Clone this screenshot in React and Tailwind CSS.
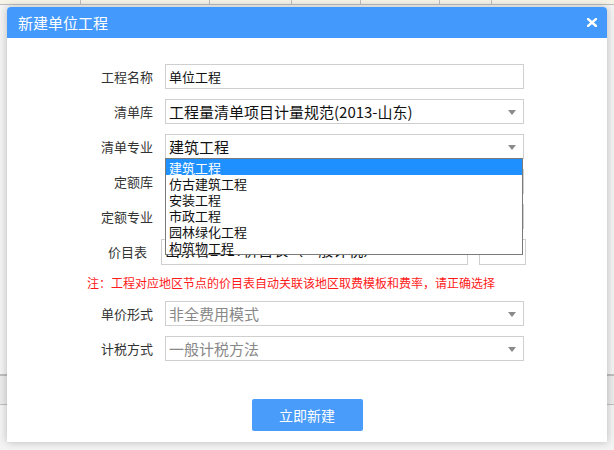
import React from "react";

const font = { fontFamily: '"Noto Sans CJK SC", "Microsoft YaHei", sans-serif' };

function Arrow() {
  return (
    <svg width="8" height="5" viewBox="0 0 8 5" className="absolute right-[7px] top-[10px]">
      <polygon points="0,0 8,0 4,5" fill="#8a8a8a" />
    </svg>
  );
}

function Row({ label, children, labelW = "w-[146px]", gap = "ml-[12px]" }) {
  return (
    <div className="flex items-center h-[25px]">
      <div className={`${labelW} text-right text-[13px] text-[#333] leading-none`}>{label}</div>
      <div className={gap}>{children}</div>
    </div>
  );
}

function Select({ value, muted }) {
  return (
    <div className="relative w-[359px] h-[25px] border border-[#cfcfcf] bg-white flex items-center pl-[3px]">
      <span className={`text-[15px] leading-none ${muted ? "text-[#888]" : "text-[#111]"}`}>{value}</span>
      <Arrow />
    </div>
  );
}

export default function App() {
  const items = ["建筑工程", "仿古建筑工程", "安装工程", "市政工程", "园林绿化工程", "构筑物工程"];
  return (
    <div className="relative w-[614px] h-[450px] overflow-hidden bg-[#f4f4f4]" style={font}>
      {/* background app */}
      <div className="flex h-[5px] bg-[#f6f4e8] border-b border-[#bdbdbd]">
        <div className="w-[81px] border-r border-[#bdbdbd]" />
        <div className="w-[129px] border-r border-[#bdbdbd]" />
        <div className="w-[82px] border-r border-[#bdbdbd]" />
        <div className="w-[69px] border-r border-[#bdbdbd]" />
        <div className="w-[79px] border-r border-[#bdbdbd]" />
        <div className="w-[52px] border-r border-[#bdbdbd]" />
      </div>
      <div className="absolute left-0 right-0 top-[374px] h-[31px] border-t-2 border-b border-[#bfbfbf] bg-[#ececec]" />

      {/* dialog */}
      <div className="absolute left-[7px] top-[7px] w-[600px] h-[435px] bg-white rounded-t-[4px] shadow-[0_0_8px_rgba(0,0,0,0.25)]">
        <div className="h-[31px] bg-[#4499fc] rounded-t-[4px] flex items-center justify-between pl-[11px] pr-[10px]">
          <span className="text-white text-[15px] leading-none">新建单位工程</span>
          <svg width="10" height="9" viewBox="0 0 10 9">
            <path d="M1 1 L9 8 M9 1 L1 8" stroke="white" strokeWidth="2.4" strokeLinecap="square" />
          </svg>
        </div>

        <div className="pt-[26px] flex flex-col gap-[10px]">
          <Row label="工程名称">
            <div className="w-[359px] h-[25px] border border-[#cfcfcf] flex items-center pl-[3px]">
              <span className="text-[13px] text-[#111] leading-none">单位工程</span>
            </div>
          </Row>
          <Row label="清单库">
            <Select value="工程量清单项目计量规范(2013-山东)" />
          </Row>
          <Row label="清单专业">
            <Select value="建筑工程" />
          </Row>
          <Row label="定额库">
            <Select value="" />
          </Row>
          <Row label="定额专业">
            <Select value="" />
          </Row>
          <Row label="价目表" labelW="w-[140px]" gap="ml-[14px]">
            <div className="flex">
              <div className="w-[307px] h-[26px] border border-[#cfcfcf] flex items-start pl-[3px] pt-[2px]">
                <span className="text-[15px] text-[#111] leading-none">山东省2017价目表（一般计税）</span>
              </div>
              <div className="ml-[11px] w-[47px] h-[26px] border border-[#cfcfcf] flex items-end justify-center pb-[7px] text-[#111] text-[14px] leading-none font-bold">
                ···
              </div>
            </div>
          </Row>
        </div>

        <div className="mt-[9px] pl-[80px] h-[20px] flex items-center text-[12px] text-[#ff1a1a] leading-none">
          注：工程对应地区节点的价目表自动关联该地区取费模板和费率，请正确选择
        </div>

        <div className="mt-[8px] flex flex-col gap-[10px]">
          <Row label="单价形式">
            <Select value="非全费用模式" muted />
          </Row>
          <Row label="计税方式">
            <Select value="一般计税方法" muted />
          </Row>
        </div>

        <div className="mt-[38px] flex justify-center">
          <button className="w-[111px] h-[32px] rounded-[2px] bg-[#4a9cfa] text-white text-[14px] leading-none">
            立即新建
          </button>
        </div>

        {/* dropdown list */}
        <div className="absolute left-[158px] top-[151px] w-[358px] h-[97px] bg-white border border-[#7a7a7a]">
          {items.map((t, i) => (
            <div
              key={t}
              className={`h-[16px] pl-[3px] flex items-center text-[13px] leading-none ${
                i === 0 ? "bg-[#1e90ff] text-white" : "text-[#111]"
              }`}
            >
              {t}
            </div>
          ))}
        </div>
      </div>
    </div>
  );
}
